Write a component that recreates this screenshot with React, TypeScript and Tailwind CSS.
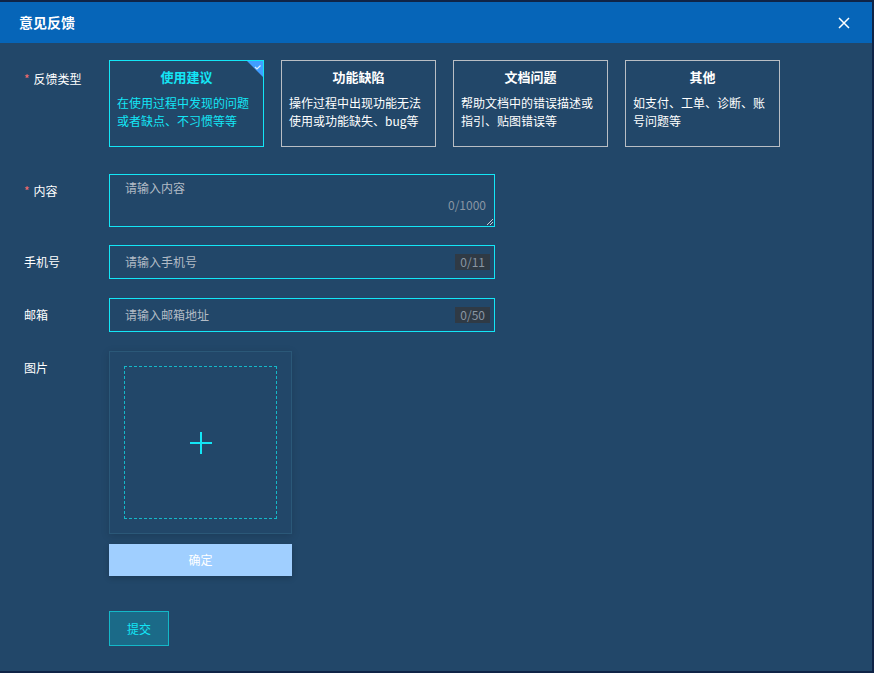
import { useState } from "react";

const types: { title: string; desc: string }[] = [
  { title: "使用建议", desc: "在使用过程中发现的问题或者缺点、不习惯等等" },
  { title: "功能缺陷", desc: "操作过程中出现功能无法使用或功能缺失、bug等" },
  { title: "文档问题", desc: "帮助文档中的错误描述或指引、贴图错误等" },
  { title: "其他", desc: "如支付、工单、诊断、账号问题等" },
];

const font = "font-['Microsoft_YaHei','Noto_Sans_CJK_SC',sans-serif]";

const Label = ({ text, required }: { text: string; required?: boolean }) => (
  <div className="w-[85px] shrink-0 pl-6 text-[12px] leading-[18px] text-white">
    {required && <span className="text-[#f56c6c] mr-1">*</span>}
    {text}
  </div>
);

export default function App() {
  const [active, setActive] = useState(0);

  return (
    <div className={`w-[874px] h-[673px] bg-[#0f2447] ${font}`}>
      <div className="w-[872px] h-[673px] pt-[2px] pb-[2px] flex flex-col">
        <div className="h-[41px] shrink-0 bg-[#0665b8] flex items-center justify-between pl-[19px] pr-[22px]">
          <span className="text-white text-[14px] font-bold">意见反馈</span>
          <svg width="12" height="12" viewBox="0 0 12 12" className="text-white">
            <path d="M1 1l10 10M11 1L1 11" stroke="currentColor" strokeWidth="1.5" />
          </svg>
        </div>
        <div className="flex-1 bg-[#224769] pt-[17px]">
          {/* feedback type */}
          <div className="flex">
            <div className="pt-[10px]">
              <Label text="反馈类型" required />
            </div>
            <div className="flex gap-[17px] ml-[24px]">
              {types.map((t, i) => {
                const on = i === active;
                return (
                  <div
                    key={t.title}
                    onClick={() => setActive(i)}
                    className={`relative w-[155px] h-[87px] border text-left px-[7px] pt-[7px] overflow-hidden cursor-pointer ${
                      on ? "border-[#13e6f6] text-[#13e6f6]" : "border-[#b9bec4] text-white"
                    }`}
                  >
                    <div className="text-center text-[13px] font-bold leading-[18px]">{t.title}</div>
                    <div className="mt-[8px] text-[12px] leading-[18px]">{t.desc}</div>
                    {on && (
                      <div className="absolute top-0 right-0 w-[16px] h-[16px]">
                        <svg width="16" height="16" viewBox="0 0 16 16">
                          <path d="M0 0h16v16z" fill="#409eff" />
                          <path d="M8 6l2 2 3.5-3.5" stroke="#d8ecff" strokeWidth="1.2" fill="none" />
                        </svg>
                      </div>
                    )}
                  </div>
                );
              })}
            </div>
          </div>

          {/* content */}
          <div className="flex mt-[27px]">
            <div className="pt-[8px]">
              <Label text="内容" required />
            </div>
            <div className="relative ml-[24px] w-[386px] h-[53px] border border-[#13e6f6]">
              <div className="pl-[15px] pt-[4px] text-[12px] leading-[18px] text-[#b3bcc6]">请输入内容</div>
              <div className="absolute right-[8px] bottom-[12px] text-[12px] text-[#8a96a3]">0/1000</div>
              <svg width="7" height="7" viewBox="0 0 7 7" className="absolute right-[1px] bottom-[1px]">
                <path d="M1 7l6-6M4 7l3-3" stroke="#c8cfd6" strokeWidth="1" />
              </svg>
            </div>
          </div>

          {/* phone */}
          <div className="flex mt-[18px] items-center">
            <Label text="手机号" />
            <div className="ml-[24px] w-[386px] h-[34px] border border-[#13e6f6] flex items-center justify-between pl-[15px] pr-[4px]">
              <span className="text-[12px] text-[#b3bcc6]">请输入手机号</span>
              <span className="bg-[#2f3a45] text-[12px] text-[#8a96a3] px-[5px] leading-[16px] h-[16px]">0/11</span>
            </div>
          </div>

          {/* email */}
          <div className="flex mt-[19px] items-center">
            <Label text="邮箱" />
            <div className="ml-[24px] w-[386px] h-[34px] border border-[#13e6f6] flex items-center justify-between pl-[15px] pr-[4px]">
              <span className="text-[12px] text-[#b3bcc6]">请输入邮箱地址</span>
              <span className="bg-[#2f3a45] text-[12px] text-[#8a96a3] px-[5px] leading-[16px] h-[16px]">0/50</span>
            </div>
          </div>

          {/* image */}
          <div className="flex mt-[19px]">
            <div className="pt-[8px]">
              <Label text="图片" />
            </div>
            <div className="ml-[24px] flex flex-col">
              <div className="w-[183px] h-[183px] border border-[#2b5878] p-[14px] shadow-[0_2px_8px_rgba(0,0,0,0.15)]">
                <div className="w-full h-full border border-dashed border-[#14b8c8] flex items-center justify-center">
                  <svg width="24" height="24" viewBox="0 0 24 24">
                    <path d="M12 1v22M1 12h22" stroke="#13e6f6" strokeWidth="2" />
                  </svg>
                </div>
              </div>
              <button
                type="button"
                className="mt-[10px] w-[183px] h-[32px] bg-[#a0cfff] text-white text-[12px] shadow-[0_2px_6px_rgba(0,0,0,0.2)]"
              >
                确定
              </button>
            </div>
          </div>

          {/* submit */}
          <div className="mt-[35px] pl-[109px]">
            <button
              type="button"
              className="w-[60px] h-[35px] border border-[#14b8c8] bg-[#1b6a88] text-[#13e6f6] text-[12px]"
            >
              提交
            </button>
          </div>
        </div>
      </div>
    </div>
  );
}
